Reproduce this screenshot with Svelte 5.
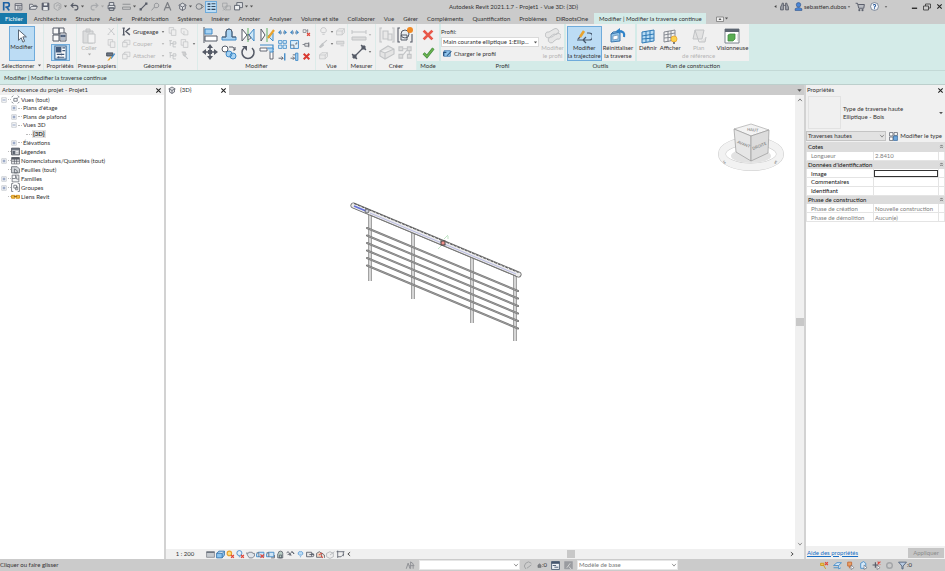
<script>
	const K = '#555a66'
	const G = '#c2c4c6'
	const B = '#3f8ac8'
	const L = '#a9d3f2'
	const R = '#e0483c'
	const N = 'none'
	const O = '#e8a32e'

	// every icon is a list of [path, stroke, fill, stroke width] on a 16x16 grid
	const icons = {
		logo: [['M3 15V1h6a4 4 0 0 1 0 8H6M8 9l5 6', '#1d62a5', N, 3]],
		home: [['M2 3h12v11H2zM2 6h12M7 6v8M9 9h3M9 11h3', K, '#e6e8ea', 1.5]],
		open: [['M1 13V4h5l1 2h6v2M1 13l3-5h11l-3 5z', K, '#e3e5e8', 1.4]],
		save: [['M2 2h12v12H2z', K, '#5a6070', 1.5], ['M5 2h6v4H5zM4 9h8v5H4z', N, '#e8eaec', 0]],
		sync: [['M8 1l6 3v7l-6 4-6-4V4zM6 8a3 3 0 1 1 3 3', '#a0a2a5', N, 1.5]],
		undo: [['M2 6h8a4 4 0 0 1 0 8H8M6 2L2 6l4 4', K, N, 2]],
		redo: [['M14 6H6a4 4 0 0 0 0 8h2M10 2l4 4-4 4', '#a8aaad', N, 2]],
		print: [['M4 6V1h8v5M2 6h12v6H2zM4 10h8v5H4z', K, '#e3e5e8', 1.6]],
		measure: [['M1 4h14M1 9h14v4H1z', '#85888c', N, 1.5]],
		dim: [['M3 13L13 3', K, N, 2], ['M1 11h4v4H1zM11 1h4v4h-4z', N, K, 0]],
		tag: [['M1 15l5-6M6 9V5a4 4 0 1 1 5 5H6', '#8d9094', N, 1.5]],
		text: [['M2 15L8 1l6 14M4 10h8', '#7b7e83', N, 2.2]],
		view3d: [['M1 6l7-4 7 4M3 6v6l5 3 5-3V6M3 6l5 3 5-3M8 9v6', K, '#dfe1e4', 1.5]],
		section: [['M7 3a5 5 0 1 1 0 10a5 5 0 1 1 0-10M11 4l4 4-4 4', '#74787e', N, 1.6]],
		thin: [['M1 2h5v3H1zM1 7h5v2H1zM1 12h5v2H1z', N, '#34495f', 0], ['M8 3h7M8 8h7M8 13h7', '#34495f', N, 2]],
		closewin: [['M1 2h8v7H1zM7 7h8v7H7zM2 11l4 4M6 11l-4 4', '#a0a2a5', N, 1.4]],
		switch: [['M5 1h10v9H5z', K, '#dfe1e4', 1.5], ['M1 6h9v8H1z', K, '#eef0f1', 1.6]],
		caret: [['M3 5h10l-5 6z', N, '#555', 0]],
		caretg: [['M3 5h10l-5 6z', N, '#a8a8a8', 0]],
		left: [['M11 3v10L4 8z', N, '#444', 0]],
		chevd: [['M3 5l5 6 5-6', '#777', N, 2]],
		chevu: [['M3 11l5-6 5 6', '#666', N, 2.2]],
		chevl: [['M11 3L5 8l6 5', '#444', N, 2.4]],
		chevr: [['M5 3l6 5-6 5', '#444', N, 2.4]],
		chev2: [['M4 7l4-4 4 4M4 13l4-4 4 4', '#333', N, 2]],
		binoc: [['M3 5l1-3h2v12H1V9zM13 5l-1-3h-2v12h5V9zM6 6h4', K, '#9da1a9', 1.5]],
		user: [['M8 1a4 4 0 1 1 0 8a4 4 0 1 1 0-8M2 15v-3l4-2h4l4 2v3z', '#294b83', '#4a86d6', 1]],
		cart: [['M1 2h3l2 8h8l1-6H5', K, '#b9bcc2', 1.5], ['M6 12h2v2H6zM11 12h2v2h-2z', K, K, 1]],
		help: [['M8 1a7 7 0 1 1 0 14a7 7 0 1 1 0-14', '#5c6a80', '#f3f5f8', 1.3], ['M6 6a2 2 0 1 1 3 2l-1 1v1M8 11v2', '#2a5b9c', N, 1.8]],
		min: [['M2 12h12', '#222', N, 3]],
		restore: [['M5 6V2h10v8h-4M1 6h10v8H1z', '#333', N, 1.6]],
		close: [['M3 3l10 10M13 3L3 13', '#222', N, 2.4]],
		cursor: [['M4 1v12l3-3 2 5 2-1-2-5h4z', '#53606e', '#fff', 1.1]],
		famtype: [['M1 1h6v6H1zM1 8h6v6H1zM7 1h5v6H7z', K, '#fafafa', 1], ['M8 6h6v8H8z', K, '#fff', 1], ['M9 8h4v2H9zM9 12h4', '#41597a', '#6b7688', 0.8]],
		props: [['M2 1h12v14H2z', '#3d6d9c', '#fdfdfd', 1.2], ['M3 2h6v6H3z', N, '#41597a', 0], ['M10 3h3M10 6h3M4 10h8M4 13h8M9 9v2M6 12v2', '#41597a', N, 1.2]],
		paste: [['M2 3h10v12H2zM5 1h4v3H5z', G, '#dcddde', 1], ['M7 6h7v9H7z', G, '#f3f3f3', 1]],
		cut: [['M3 2l9 10M12 2L3 12M1 13h3M11 13h3', G, N, 1.6]],
		copyg: [['M2 1h8v10H2z', G, '#eee', 1.3], ['M6 5h8v10H6z', G, '#eee', 1.3]],
		brush: [['M1 3h10v5H1z', '#3f4854', '#6d7784', 1.3], ['M14 4L8 12', B, N, 2], ['M9 10l-4 5H2l5-6z', N, O, 0]],
		cope: [['M1 2h4M1 14h4M3 2v12M14 2L7 8l7 6', K, N, 2.4], ['M7 8l4-5', K, N, 1.5]],
		cutgeo: [['M1 6h8v8H1zM5 6V2h9v8H9M1 6l4-4', G, '#eee', 1.3]],
		wallg: [['M2 3h7l5 4v7H7l-5-4zM7 7v7', G, '#eee', 1.3]],
		splitg: [['M2 3h5M4 3v9M4 8h5M9 5h5v4H9zM9 9v5h5', G, N, 1.6]],
		hammerg: [['M3 2h6l2 4-3 3-3-3M8 8l6 6', G, '#cfcfcf', 1.8]],
		align: [['M2 0v16', K, N, 1], ['M3 2h7v5H3z', B, L, 1], ['M3 9h12v5H3z', K, '#fff', 1]],
		offset: [['M1 13h14v-3h-4V5a3 3 0 0 0-6 0v5H1z', B, L, 1], ['M1 10h4V5a3 3 0 0 1 6 0v5h4', K, N, 1]],
		mirror: [['M2 2v12l5-6z', K, '#fff', 1], ['M8 1v14', '#5fae63', N, 1], ['M14 2v12L9 8z', B, '#cfe7f6', 1], ['M8 7v6l3-2z', K, '#eee', 0.8]],
		mirrord: [['M2 2v12l4-6z', K, '#fff', 1], ['M8 1v14', '#5fae63', N, 1], ['M14 6v8L9 9z', B, '#cfe7f6', 1], ['M15 3l-6 8', O, N, 2.2]],
		move: [['M8 3v10M3 8h10', K, N, 1.6], ['M8 0l3 4H5zM8 16l3-4H5zM0 8l4-3v6zM16 8l-4-3v6z', N, K, 0], ['M6 6h4v4H6z', N, K, 0]],
		copy: [['M4 2a3 3 0 1 1 0 6a3 3 0 1 1 0-6', K, '#fff', 1], ['M8 3h4l2 3M12 6h2V3', K, N, 1], ['M8 7a3 3 0 1 1 0 6a3 3 0 1 1 0-6M12 9a3 3 0 1 1 0 6a3 3 0 1 1 0-6', B, L, 1]],
		rotate: [['M4 4a6 6 0 1 0 8 0', K, N, 1.5], ['M2 2h5v5z', N, K, 0]],
		trim: [['M1 4h7v3H1zM11 7h3v8h-3z', K, '#fff', 0.9], ['M1 1h13v5', B, N, 1.2], ['M8 4h6v4h-3', B, L, 1]],
		split: [['M5 3v9L0 8zM11 3v9l5-4z', N, B, 0], ['M4 6h3v4H4zM9 6h3v4H9z', N, '#8ea3b8', 0]],
		array: [['M1 1h6v5H1zM9 1h6v5H9zM1 9h6v6H1zM9 9h6v6H9z', B, '#d6ebf9', 1.4]],
		scale: [['M1 1h14v14H1z', B, '#dff0fb', 1.6], ['M1 9h6v6M9 7h3V4', K, N, 1.4]],
		extend: [['M1 11h8M6 8l3 3-3 3', K, N, 1.6], ['M12 2v13', B, N, 2.4]],
		extend2: [['M1 11h7M5 8l3 3-3 3M5 5h5', K, N, 1.5], ['M10 2h4v13h-4z', B, L, 1.6]],
		unpin: [['M2 3h5v5H2zM7 5h4M10 2v7', '#7c8088', N, 1.3], ['M9 9l5 5M14 9l-5 5', R, N, 2.4]],
		pin: [['M12 4v9M5 6h7v5H5zM1 8h4', '#6a6e76', '#e0e0e0', 1.4]],
		del: [['M3 3l10 10M13 3L3 13', '#d93a32', N, 3.6]],
		bulbg: [['M8 1a5 5 0 0 1 3 9H5a5 5 0 0 1 3-9M6 13h4', G, '#eee', 1.5]],
		boxg: [['M1 7l4-4h10v7l-4 4H1zM1 7h10l4-4M11 7v7', G, '#e9e9e9', 1.3]],
		brushg: [['M14 2L6 9M6 8l2 3-5 4-2-1z', G, G, 1.8]],
		lineg: [['M1 4h13v5H1zM8 12h6', G, '#ddd', 1.5]],
		measureg: [['M1 5h14M1 3v4M15 3v4M1 10h14v3H1z', G, '#ddd', 1]],
		diml: [['M3 13L13 3', K, N, 1.3], ['M1 10l5 5M10 1l5 5', K, N, 1.2], ['M2 11h3v3H2zM11 2h3v3h-3z', K, K, 1]],
		groupg: [['M3 1H1v14h2M13 1h2v14h-2M4 4h5v8H4zM9 7h4v6H9z', G, '#e8e8e8', 1.1]],
		assembly: [['M3 1H1v14h2M15 7v8h-2', K, N, 1.1], ['M8 3a4 4 0 1 1 0 8a4 4 0 1 1 0-8M4 8h6v5H4z', K, '#e8edf2', 1], ['M13 0a3 3 0 1 1 0 6a3 3 0 1 1 0-6', N, '#f08a24', 0]],
		partsg: [['M1 7l8-5 6 3v5l-9 5-5-3zM1 7l5 2 9-4M6 9v6', G, '#e4e4e4', 1.1]],
		nodesg: [['M1 2h4v4H1zM10 2h4v4h-4zM1 10h4v4H1zM10 10h4v4h-4zM5 4h5M5 11l5-6M12 6v4', G, '#ddd', 1.1]],
		check: [['M2 9l4 4 8-10', '#3d8b40', N, 3.6], ['M2 9l4 4 8-10', '#6cb04f', N, 2]],
		cancel: [['M3 3l10 10M13 3L3 13', '#e8584a', N, 3.2]],
		load: [['M2 3h11v10H2z', '#3b76ad', '#8fc3ea', 1.3], ['M1 13V6h5M15 4l-8 8', '#24527f', N, 1.8]],
		profg: [['M9 1a3 3 0 1 1 0 5l-3 2a3 3 0 1 1-2-4zM11 6a3 3 0 1 1 1 5l-3 2a3 3 0 1 1-2-4z', G, '#e6e6e6', 1]],
		path: [['M1 12h12a3 3 0 0 0 0-7h-2M10 9l-3 3 3 3', '#45566b', N, 1.2], ['M8 3L4 9', O, N, 2.6], ['M4 9l-2 2', K, N, 1.2]],
		reset: [['M1 6l9-2v9l-9 1zM1 6l2-2 9-1v2', '#3b76ad', '#8fc3ea', 1], ['M3 8l5-1v4l-5 1z', '#6f93b5', '#fff', 0.8], ['M14 9c1-4-1-6-5-6', '#2e83c9', N, 2.2], ['M10 0v6L6 3z', N, '#2e83c9', 0]],
		plane: [['M2 4l12-2v11l-12 2zM6 3v11M10 3v10M2 8l12-2M2 11l12-1', '#2e79b5', '#b7dcf4', 1]],
		show: [['M2 4l11-2v10l-11 2zM6 3v11M9 3v10M2 7l11-2M2 10l11-1', '#7b8088', '#f2f2f2', 0.9], ['M12 8a3 3 0 1 1 0 6a3 3 0 1 1 0-6', O, '#fbd24e', 0.8], ['M11 15h2', K, N, 1.3]],
		planeg: [['M4 2h9l-2 9H2zM8 14h6l1-5M4 2l4 12', G, '#e2e2e2', 1]],
		viewer: [['M1 1h14v14H1z', '#7b828c', '#fff', 1], ['M1 1h14v3H1z', N, '#5d6672', 0], ['M4 7l2-1h5v5l-2 2H4z', '#3f8a3f', '#59ad52', 0.8], ['M14 6v7', G, N, 1]],
		ribbonmenu: [['M1 4h14v9H1z', '#666', '#eee', 1.3], ['M8 6l3 4H5z', N, '#555', 0]],
		edittype: [['M1 1h6v6H1zM9 1h6v5H9zM1 9h6v6H1z', K, '#fff', 1.3], ['M8 7h7v8H8z', '#2d5f96', '#6ea7dc', 1.2]],
		views: [['M1 4l3-3M12 1l3 3M15 12l-3 3M4 15l-3-3M5 6h6v5H5zM11 6l2-2', K, N, 1.3]],
		legend: [['M1 2h14v12H1z', '#4d525a', '#b7bac0', 1.5], ['M1 2h14v3H1zM3 7h4v6H3z', N, '#5c6470', 0], ['M9 8h4M9 11h4', '#fff', N, 1.3]],
		sched: [['M1 3h14v11H1zM1 7h14M6 3v11M10 3v11M1 10h14', '#555a63', '#fff', 1.2], ['M1 2h14v4H1z', N, '#555a63', 0]],
		sheet: [['M1 3h10l4 4v7H1zM6 7l5 3v4H6z', '#555a63', '#d6d9dd', 1.3]],
		family: [['M2 2h12v12H2zM2 8h6V2M10 4v5h4', '#6a6f78', '#f2f3f4', 1.4]],
		group: [['M4 1H1v14h3M12 1h3v14h-3M5 4h5v5H5zM9 7h3v5H8z', '#5c616a', N, 1.3]],
		link: [['M1 6h6v5H1zM9 6h6v5H9z', '#d18b12', '#f2c14a', 1.6], ['M5 8h6', '#9a6a16', N, 1.8]],
		plus: [['M2 2h12v12H2z', '#9aa0a8', '#fff', 1.3], ['M4 8h8M8 4v8', '#3e5c94', N, 1.6]],
		minus: [['M2 2h12v12H2z', '#9aa0a8', '#fff', 1.3], ['M4 8h8', '#3e5c94', N, 1.6]],
		detail: [['M1 3h14v10H1z', '#7b8088', '#c6cacf', 1.3], ['M1 4h14', '#5c6470', N, 2]],
		style: [['M1 6l4-4h10v7l-4 5H1zM1 6h10l4-4M11 6v8', '#2c6ea8', '#8cc4ee', 1.4]],
		sun: [['M6 2a4 4 0 1 1 0 8a4 4 0 1 1 0-8', O, '#fbe08a', 2], ['M9 9l5 5M14 9l-5 5', R, N, 2.2]],
		shadow: [['M6 1a4 4 0 1 1 0 9a4 4 0 1 1 0-9M5 12h3', B, '#e1effa', 1.5], ['M9 9l5 5M14 9l-5 5', R, N, 2.2]],
		teapot: [['M1 5l3 1 1-2h6l1 2h3v5l-4 3H6L3 10z', '#6c7480', '#dfe4ea', 1.4]],
		crop: [['M4 4h10v8H1V7z', B, '#cfe4f5', 1.6], ['M1 5h4v7', K, N, 1.2], ['M8 8l6 6M14 8l-6 6', R, N, 2]],
		cropshow: [['M4 4h10v8H1V7z', B, '#cfe4f5', 1.6], ['M1 5h4v7M9 14h6V9', K, N, 1.4]],
		lock: [['M4 6a4 4 0 0 1 8 0v8H3V7zM6 9h4v5H6z', K, '#b9cdc4', 1.4]],
		glasses: [['M1 5l3-2 5 7M3 9a2 2 0 1 1 4 1M9 9a3 3 0 1 1 5-2L10 2', K, N, 1.5]],
		bulb: [['M8 3a3 3 0 0 1 2 6H6a3 3 0 0 1 2-6M7 12h2', '#5c9bd5', '#bfe0f8', 1.5]],
		constraint: [['M1 4h9v8H1zM6 8h8M11 6a3 3 0 1 1 0 6', K, '#e6e6e6', 1.5]],
		displace: [['M1 13V6l5-3 4 3v7zM10 5l5 4v5', K, '#f2d6c2', 1.4], ['M5 9l6-4M9 10l3 4', R, N, 1.8]],
		ghost: [['M1 6l6-3 6 3v6l-6 3-6-3zM7 9l8-6', '#a9acb0', '#eee', 1.3]],
		scope: [['M1 3h14M3 1v13M13 3v8M3 12h6l5-5', K, N, 1.4]],
		wsets: [['M2 14l3-9 3 9M9 14V3l4 3v8M7 9h8', '#909296', N, 1.6]],
		pencilg: [['M3 14a7 7 0 0 1 10-10M5 13l8-6', '#999b9e', '#ccc', 1.5]],
		house: [['M3 14V7l5-5 5 5v7z', '#5d6065', '#808388', 1.5]],
		options: [['M1 1h14v14H1z', '#44566e', '#eef2f7', 1.5], ['M1 1h14v4H1z', N, '#44566e', 0], ['M3 8h6M6 11h7', '#44566e', N, 1.6]],
		excl: [['M1 1h14v13H1z', '#9a9ca0', '#9a9ca0', 1], ['M5 12l6-8M9 10l4 5', '#ddd', N, 1.5]],
		sellink: [['M1 4h6v4H1zM6 7l4 7', '#cf9a1d', '#f0c456', 1.6], ['M9 2l5 5M14 2L9 7', R, N, 2.2]],
		selund: [['M1 8l6-5h8l-5 5zM1 12h8M10 8v6l4-2', B, '#d5e8f8', 1.5]],
		selpin: [['M3 2h7v7H3zM6 9v4', '#c66a34', '#e9a067', 1.6], ['M9 7v8l5-3z', K, '#fff', 1]],
		selface: [['M3 4l5-3 4 3v9H3z', B, '#d5e8f8', 1.5], ['M9 7v8l5-3z', K, '#fff', 1]],
		seldrag: [['M6 2v10M1 7h10', K, N, 2], ['M10 1l5 5M15 1l-5 5', R, N, 2], ['M9 7v8l5-3z', K, '#fff', 1]],
		gear: [['M8 3a5 5 0 1 1 0 10a5 5 0 1 1 0-10', '#a3a5a8', N, 2.5]],
		filter: [['M1 2h14L9 9v5H7V9z', '#4e5f78', '#b9cbe2', 1.5]]
	}

	const quick = [
		['logo', 'Revit'], ['home', 'Accueil'], [''], ['open', 'Ouvrir'], ['save', 'Enregistrer'],
		['sync', 'Synchroniser'], ['caret'], ['undo', 'Annuler'], ['caret'], [''], ['redo', 'Rétablir'],
		['caretg'], ['print', 'Imprimer'], [''], ['measure', 'Mesurer'], ['caret'], ['dim', 'Cote alignée'],
		['tag', 'Étiquette'], ['text', 'Texte'], [''], ['view3d', 'Vue 3D par défaut'], ['caret'],
		['section', 'Coupe'], ['thin', 'Lignes fines'], [''], ['closewin', 'Fermer les vues'],
		['switch', 'Changer de fenêtre'], ['caret'], ['caret']
	]

	const tabs = [
		'Fichier', 'Architecture', 'Structure', 'Acier', 'Préfabrication', 'Systèmes', 'Insérer',
		'Annoter', 'Analyser', 'Volume et site', 'Collaborer', 'Vue', 'Gérer', 'Compléments',
		'Quantification', 'Problèmes', 'DiRootsOne', 'Modifier | Modifier la traverse continue'
	]

	const geometry = [
		['cope', 'Grugeage', 'copyg', 'wallg', false],
		['cutgeo', 'Couper', 'splitg', 'copyg', true],
		['cutgeo', 'Attacher', 'splitg', 'hammerg', false]
	]

	const modifyLarge = ['align', 'offset', 'mirror', 'mirrord', 'move', 'copy', 'rotate', 'trim']
	const modifySmall = ['split', 'split', 'unpin', 'array', 'scale', 'pin', 'extend', 'extend2', 'del']

	// level, expander, icon, label
	const tree = [
		[0, 'minus', 'views', 'Vues (tout)'],
		[1, 'plus', '', "Plans d'étage"],
		[1, 'plus', '', 'Plans de plafond'],
		[1, 'minus', '', 'Vues 3D'],
		[2, '', '', '{3D}'],
		[1, 'plus', '', 'Élévations'],
		[0, '', 'legend', 'Légendes'],
		[0, 'plus', 'sched', 'Nomenclatures/Quantités (tout)'],
		[0, '', 'sheet', 'Feuilles (tout)'],
		[0, 'plus', 'family', 'Familles'],
		[0, 'plus', 'group', 'Groupes'],
		[0, '', 'link', 'Liens Revit']
	]

	const properties = [
		{ head: 'Cotes' },
		{ name: 'Longueur', value: '2.8410', off: true },
		{ head: "Données d'identification" },
		{ name: 'Image', value: '', focus: true },
		{ name: 'Commentaires', value: '' },
		{ name: 'Identifiant', value: '' },
		{ head: 'Phase de construction' },
		{ name: 'Phase de création', value: 'Nouvelle construction', off: true },
		{ name: 'Phase de démolition', value: 'Aucun(e)', off: true }
	]

	const viewTools = ['detail', 'style', 'sun', 'shadow', 'teapot', 'crop', 'cropshow', 'lock', 'glasses', 'bulb', 'constraint', 'displace', 'ghost', 'scope']
	const selectTools = ['sellink', 'selund', 'selpin', 'selface', 'seldrag', 'gear', 'filter']

	const rods = [0, 1, 2, 3, 4, 5]
	const posts = [
		[20, 14, 81],
		[63, 32, 99],
		[122, 56, 123],
		[165, 75, 141]
	]

	let activeTab = $state(tabs.length - 1)
	let selected = $state(4)
</script>

{#snippet icon(name, size)}
	<svg class="icon" width={size} height={size} viewBox="0 0 16 16" aria-hidden="true">
		{#each icons[name] as [d, stroke, fill, sw]}
			<path {d} {stroke} {fill} stroke-width={sw} />
		{/each}
	</svg>
{/snippet}

{#snippet tool(name, size, label)}
	<button class="tool" aria-label={label ?? name}>{@render icon(name, size)}</button>
{/snippet}

<div class="app">
	<header class="titlebar">
		<div class="quick">
			{#each quick as [name, label]}
				{#if !name}
					<span class="gap"></span>
				{:else if name.startsWith('caret')}
					<button class="drop" aria-label="Menu">{@render icon(name, 5)}</button>
				{:else}
					<button class="qbtn" class:on={name === 'thin'} aria-label={label}>{@render icon(name, 9)}</button>
				{/if}
			{/each}
		</div>
		<h1>Autodesk Revit 2021.1.7 - Projet1 - Vue 3D: {'{3D}'}</h1>
		<div class="account">
			{@render icon('left', 5)}
			{@render tool('binoc', 9, 'Rechercher')}
			<button class="user">{@render icon('user', 9)}<span>sebastien.dubos</span>{@render icon('caret', 4)}</button>
			{@render tool('cart', 10, 'Boutique')}
			{@render tool('help', 9, 'Aide')}
			{@render icon('caret', 4)}
		</div>
		<div class="window">
			{@render tool('min', 7, 'Réduire')}
			{@render tool('restore', 8, 'Restaurer')}
			{@render tool('close', 7, 'Fermer')}
		</div>
	</header>

	<nav class="tabs">
		{#each tabs as tab, i}
			<button class:file={i === 0} class:active={i === activeTab} onclick={() => (activeTab = i)}>{tab}</button>
		{/each}
		<button class="more" aria-label="Affichage du ruban">{@render icon('ribbonmenu', 8)}{@render icon('caret', 5)}</button>
	</nav>

	<div class="ribbon">
		<section class="panel select">
			<div class="body">
				<button class="big on">{@render icon('cursor', 14)}<span>Modifier</span></button>
			</div>
			<h2>Sélectionner {@render icon('caret', 5)}</h2>
		</section>
		<section class="panel props">
			<div class="body stack">
				{@render tool('famtype', 16, 'Propriétés du type')}
				<button class="tool on" aria-label="Propriétés">{@render icon('props', 15)}</button>
			</div>
			<h2>Propriétés</h2>
		</section>
		<section class="panel clip">
			<div class="body">
				<button class="big" disabled>{@render icon('paste', 16)}<span>Coller</span>{@render icon('caretg', 5)}</button>
				<div class="rows">
					{@render tool('cut', 9, 'Couper')}
					{@render tool('copyg', 9, 'Copier')}
					{@render tool('brush', 10, 'Copier le type')}
				</div>
			</div>
			<h2>Presse-papiers</h2>
		</section>
		<section class="panel geometry">
			<div class="body rows">
				{#each geometry as [name, label, a, b, more], i}
					<div class="line">
						<button class="wide" disabled={i > 0}>{@render icon(name, 9)}<span>{label}</span>{@render icon(i ? 'caretg' : 'caret', 4)}</button>
						{@render tool(a, 9)}
						{@render tool(b, 9)}
						{#if more}{@render icon('caret', 4)}{/if}
					</div>
				{/each}
			</div>
			<h2>Géométrie</h2>
		</section>
		<section class="panel modify">
			<div class="body">
				<div class="large">
					{#each modifyLarge as name}{@render tool(name, 16)}{/each}
				</div>
				<div class="small">
					{#each modifySmall as name}{@render tool(name, 9)}{/each}
				</div>
			</div>
			<h2>Modifier</h2>
		</section>
		<section class="panel view">
			<div class="body rows">
				<div class="line">{@render tool('bulbg', 9)}{@render icon('caret', 4)}{@render tool('boxg', 9)}</div>
				<div class="line">{@render tool('brushg', 9)}{@render icon('caret', 4)}{@render tool('lineg', 9)}</div>
				<div class="line">{@render tool('boxg', 9)}</div>
			</div>
			<h2>Vue</h2>
		</section>
		<section class="panel measure">
			<div class="body stack">
				<div class="line">{@render tool('measureg', 16)}{@render icon('caretg', 4)}</div>
				<div class="line">{@render tool('diml', 16)}{@render icon('caret', 4)}</div>
			</div>
			<h2>Mesurer</h2>
		</section>
		<section class="panel create">
			<div class="body large">
				{@render tool('groupg', 16)}
				{@render tool('assembly', 16)}
				{@render tool('partsg', 16)}
				{@render tool('nodesg', 15)}
			</div>
			<h2>Créer</h2>
		</section>
		<section class="panel context mode">
			<div class="body stack">
				{@render tool('cancel', 14, 'Annuler')}
				{@render tool('check', 13, 'Terminer')}
			</div>
			<h2>Mode</h2>
		</section>
		<section class="panel context profile">
			<div class="body">
				<div class="field">
					<label for="profile">Profil:</label>
					<span class="combo">
						<select id="profile"><option>Main courante elliptique 1:Ellip...</option></select>
						{@render icon('caret', 5)}
					</span>
					<button class="wide">{@render icon('load', 9)}<span>Charger le profil</span></button>
				</div>
				<button class="big" disabled>{@render icon('profg', 16)}<span>Modifier<br />le profil</span></button>
			</div>
			<h2>Profil</h2>
		</section>
		<section class="panel context tools">
			<div class="body">
				<button class="big on">{@render icon('path', 16)}<span>Modifier<br />la trajectoire</span></button>
				<button class="big">{@render icon('reset', 16)}<span>Réinitialiser<br />la traverse</span></button>
			</div>
			<h2>Outils</h2>
		</section>
		<section class="panel context plan">
			<div class="body">
				<button class="big">{@render icon('plane', 16)}<span>Définir</span></button>
				<button class="big">{@render icon('show', 16)}<span>Afficher</span></button>
				<button class="big" disabled>{@render icon('planeg', 16)}<span>Plan<br />de référence</span></button>
				<button class="big">{@render icon('viewer', 16)}<span>Visionneuse</span></button>
			</div>
			<h2>Plan de construction</h2>
		</section>
	</div>

	<div class="optionbar">Modifier | Modifier la traverse continue</div>

	<main>
		<aside class="browser">
			<div class="head"><h2>Arborescence du projet - Projet1</h2>{@render tool('close', 7, 'Fermer')}</div>
			<ul>
				{#each tree as [level, exp, name, label], i}
					<li class="level{level}">
						<span class="exp">{#if exp}{@render icon(exp, 6)}{/if}</span>
						<span class="branch"></span>
						{#if name}{@render icon(name, 9)}{/if}
						<button class:current={i === selected} onclick={() => (selected = i)}>{label}</button>
					</li>
				{/each}
			</ul>
		</aside>

		<div class="center">
			<div class="viewtabs">
				<div class="viewtab">{@render icon('view3d', 8)}<span>{'{3D}'}</span>{@render tool('close', 7, 'Fermer la vue')}</div>
				{@render icon('caret', 7)}
			</div>
			<div class="viewrow">
				<div class="canvas">
					<svg class="railing" width="176" height="144" viewBox="0 0 176 144" role="img" aria-label="Garde-corps">
						{#each posts as [x, top, bottom]}
							<path d="M{x} {top}V{bottom}" stroke="#a2a2a2" stroke-width="4" />
							<path d="M{x} {top}V{bottom}" stroke="#d6d6d6" stroke-width="2" />
						{/each}
						{#each rods as n}
							<path d="M17 {28 + n * 7.5}L168 {91 + n * 7.5}" stroke="#777" stroke-width="2" stroke-linecap="round" />
							<path d="M17 {28 + n * 7.5}L168 {91 + n * 7.5}" stroke="#b4b4b4" stroke-width="0.6" />
						{/each}
						<path d="M3.5 5.5L168.5 74.5" stroke="#666" stroke-width="6" stroke-linecap="round" />
						<path d="M3.5 5.5L168.5 74.5" stroke="#ececec" stroke-width="4.4" stroke-linecap="round" />
						<path d="M4 3.5L168.5 72.5" stroke="#555" stroke-width="1" stroke-dasharray="3 1" />
						<path d="M20 13L166 74" stroke="#b9bbe4" stroke-width="1" />
						<path d="M20 15L166 76" stroke="#777" stroke-width="0.8" />
						<path d="M4 6L16 11" stroke="#6470d8" stroke-width="1.6" />
						<circle cx="17" cy="11" r="2" fill="#c7cad8" stroke="#555" stroke-width="0.8" />
						<path d="M88 49l3-3M94 39l4-4M98 39v-3" stroke="#a6d8ae" stroke-width="0.7" />
						<rect x="91" y="41" width="4" height="4" fill="#f2908b" stroke="#444" stroke-width="1" />
					</svg>
					<svg class="cube" width="68" height="52" viewBox="0 0 68 52" role="img" aria-label="ViewCube">
						<ellipse cx="34" cy="34" rx="29" ry="13" fill="none" stroke="#c9c9c9" stroke-width="8" />
						<ellipse cx="34" cy="34" rx="29" ry="13" fill="none" stroke="#f2f2f2" stroke-width="7" />
						<ellipse cx="34" cy="36" rx="20" ry="7" fill="#e2e2e2" />
						<path d="M17 9L34 4L52 10L34 16Z" fill="#f3f3f3" stroke="#aaa" stroke-width="0.7" />
						<path d="M17 9L34 16V41L19 32Z" fill="#e6e6e6" stroke="#999" stroke-width="0.7" />
						<path d="M52 10L34 16V41L51 33Z" fill="#dcdcdc" stroke="#999" stroke-width="0.7" />
						<text x="30" y="11" transform="rotate(5 34 10)">HAUT</text>
						<text x="20" y="23" transform="rotate(22 20 23)">AVANT</text>
						<text x="36" y="30" transform="rotate(-22 36 30)">DROITE</text>
						<text x="7" y="44" transform="rotate(-25 7 44)">S</text>
						<text x="57" y="43" transform="rotate(25 57 43)">E</text>
					</svg>
				</div>
				<div class="vscroll">
					{@render icon('chevu', 6)}
					<span class="thumb"></span>
					{@render icon('chevd', 6)}
				</div>
			</div>
			<div class="viewbar">
				<button class="scale">1 : 200</button>
				{#each viewTools as name}{@render tool(name, 9)}{/each}
				{@render icon('chevl', 6)}
				<div class="hscroll"><span class="thumb"></span></div>
				{@render icon('chevr', 6)}
				<span class="corner"></span>
			</div>
		</div>

		<aside class="palette">
			<div class="head"><h2>Propriétés</h2>{@render tool('close', 7, 'Fermer')}</div>
			<button class="type">
				<span class="preview"></span>
				<span class="typename">Type de traverse haute<br />Elliptique - Bois</span>
				{@render icon('caret', 6)}
			</button>
			<div class="filter">
				<span class="combo">
					<select aria-label="Catégorie"><option>Traverses hautes</option></select>
					{@render icon('chevd', 6)}
				</span>
				<button class="wide">{@render icon('edittype', 9)}<span>Modifier le type</span></button>
			</div>
			<table>
				<colgroup><col class="names" /><col /><col class="marks" /></colgroup>
				<tbody>
					{#each properties as row}
						{#if row.head}
							<tr class="group"><th colspan="2">{row.head}</th><td>{@render icon('chev2', 5)}</td></tr>
						{:else}
							<tr class:off={row.off}>
								<th scope="row">{row.name}</th>
								<td><input class:focus={row.focus} value={row.value} aria-label={row.name} disabled={row.off} /></td>
								<td></td>
							</tr>
						{/if}
					{/each}
				</tbody>
			</table>
			<div class="foot">
				<a href="#aide">Aide des propriétés</a>
				<button disabled>Appliquer</button>
			</div>
		</aside>
	</main>

	<footer>
		<span class="status">Cliquer ou faire glisser</span>
		<div class="sets">
			{@render tool('wsets', 10, 'Sous-projets')}
			<span class="combo"><select aria-label="Sous-projet actif"><option></option></select>{@render icon('chevd', 6)}</span>
			{@render tool('pencilg', 9)}
			<button class="tool" aria-label="Demandes">{@render icon('house', 5)}<span>:0</span></button>
			{@render tool('options', 9, 'Variantes')}
			{@render tool('excl', 9, 'Exclure')}
			<span class="combo"><select aria-label="Variante"><option>Modèle de base</option></select>{@render icon('chevd', 6)}</span>
		</div>
		<div class="picks">
			{#each selectTools as name}{@render tool(name, 9)}{/each}
			<span>:0</span>
		</div>
	</footer>
</div>

<style>
	:global(body) {
		margin: 0;
	}
	.app {
		display: flex;
		flex-direction: column;
		min-height: 100vh;
		background: #cbcbcb;
		color: #333;
		font: 6px/8px Lato, "Open Sans", sans-serif;
		overflow: hidden;
	}
	button, select, input {
		margin: 0;
		padding: 0;
		border: 0;
		background: none;
		color: inherit;
		font: inherit;
		border-radius: 0;
	}
	button {
		display: flex;
		align-items: center;
		justify-content: center;
		white-space: nowrap;
	}
	h1, h2 {
		margin: 0;
		font: inherit;
		white-space: nowrap;
	}
	.icon {
		display: block;
		flex: none;
	}

	.titlebar {
		display: flex;
		align-items: center;
		height: 13px;
	}
	.titlebar h1 {
		flex: 1;
		text-align: center;
	}
	.quick, .account, .window {
		display: flex;
		align-items: center;
	}
	.qbtn {
		width: 12px;
		height: 12px;
	}
	.on {
		background: #bcdcf4;
		box-shadow: inset 0 0 0 1px #6fabdb;
	}
	.drop {
		width: 5px;
	}
	.quick .gap {
		width: 3px;
	}
	.account {
		gap: 2px;
		width: 110px;
	}
	.user {
		gap: 1px;
		margin-right: 2px;
	}
	.account .tool {
		margin-right: 3px;
	}
	.window {
		justify-content: flex-end;
		gap: 5px;
		width: 60px;
		padding-right: 2px;
	}

	.tabs {
		display: flex;
		height: 11px;
	}
	.tabs button {
		padding: 0 4px 0 5px;
	}
	.tabs .file {
		margin-right: 2px;
		background: #1979aa;
		color: #fff;
	}
	.tabs .active {
		margin-left: 2px;
		background: #d4ebe8;
	}
	.tabs .more {
		margin-left: 5px;
	}

	.ribbon {
		display: flex;
		height: 47px;
		background: #d4ebe8;
		border-bottom: 1px solid #c3d9d6;
		box-sizing: border-box;
	}
	.panel {
		display: flex;
		flex-direction: column;
		flex: none;
		background: #f0f0f0;
		border-right: 1px solid #dcebe9;
		box-sizing: border-box;
		height: 46px;
	}
	.panel h2 {
		display: flex;
		align-items: center;
		justify-content: center;
		gap: 2px;
		height: 9px;
	}
	.context h2 {
		background: #d4ebe8;
	}
	.context {
		border-right: 2px solid #d4ebe8;
	}
	.body {
		display: flex;
		justify-content: center;
		height: 35px;
		padding-top: 2px;
	}
	.select { width: 44px; }
	.props { width: 33px; }
	.clip { width: 41px; }
	.geometry { width: 80px; }
	.modify { width: 118px; }
	.view { width: 32px; }
	.measure { width: 28px; }
	.create { width: 41px; }
	.mode { width: 24px; }
	.profile { width: 125px; }
	.tools { width: 71px; }
	.plan { width: 114px; }
	.big {
		flex-direction: column;
		justify-content: flex-start;
		min-width: 22px;
		padding: 2px 1px 0;
		line-height: 8px;
	}
	.select .big {
		width: 26px;
		padding-top: 3px;
	}
	.big:disabled, .wide:disabled {
		color: #b5b5b5;
	}
	.stack {
		flex-direction: column;
		align-items: center;
	}
	.stack > :global(*) {
		flex: 1;
	}
	.stack .on {
		width: 19px;
	}
	.body.rows, .rows {
		display: grid;
		grid-template-rows: repeat(3, 11px);
		align-content: start;
		justify-content: start;
		gap: 1px;
	}
	.clip .rows {
		margin-left: 6px;
	}
	.line {
		display: flex;
		align-items: center;
		gap: 1px;
	}
	.geometry .body {
		padding-left: 4px;
	}
	.geometry .line {
		gap: 3px;
	}
	.wide {
		gap: 2px;
	}
	.geometry .wide {
		justify-content: flex-start;
		width: 43px;
	}
	.geometry .wide span {
		flex: 1;
		text-align: left;
	}
	.large {
		display: grid;
		grid-template-columns: repeat(4, 19px);
		grid-template-rows: 17px 18px;
	}
	.create .large {
		grid-template-columns: 18px 18px;
	}
	.small {
		display: grid;
		grid-template-columns: repeat(3, 12px);
		grid-template-rows: repeat(3, 12px);
		align-content: start;
	}
	.view .body {
		padding-left: 3px;
	}
	.view .line {
		gap: 2px;
	}
	.profile .body {
		gap: 2px;
	}
	.field {
		display: flex;
		flex-direction: column;
		align-items: flex-start;
		gap: 1px;
		padding-top: 2px;
		width: 98px;
	}
	.combo {
		display: flex;
		align-items: center;
		box-sizing: border-box;
		width: 98px;
		height: 10px;
		background: #fff;
		border: 1px solid #dadada;
	}
	.combo select {
		flex: 1;
		min-width: 0;
		padding-left: 1px;
		appearance: none;
		line-height: 8px;
	}
	.field .wide {
		padding: 1px 2px;
	}
	.plan .body {
		justify-content: space-around;
	}

	.optionbar {
		box-sizing: border-box;
		height: 14px;
		padding: 3px 4px;
		background: #d4ebe8;
		border-bottom: 1px solid #bccfcc;
	}

	main {
		display: flex;
		flex: 1;
	}
	.head {
		display: flex;
		align-items: center;
		justify-content: space-between;
		height: 10px;
		padding: 0 2px;
		background: #f0f0f0;
	}
	.browser {
		width: 164px;
		background: #fff;
		border-right: 2px solid #d2d2d2;
	}
	.browser ul {
		display: grid;
		grid-auto-rows: 1fr;
		height: 106px;
		margin: 0;
		padding: 0 0 0 1px;
		list-style: none;
	}
	.browser li {
		display: flex;
		align-items: center;
	}
	.level1 {
		padding-left: 10px;
	}
	.level2 {
		padding-left: 18px;
	}
	.exp {
		width: 7px;
	}
	.branch {
		width: 3px;
		border-top: 1px dotted #bbb;
	}
	.level1 .branch {
		width: 4px;
	}
	.level2 .branch {
		width: 6px;
	}
	.browser li button {
		padding: 0 1px;
	}
	.browser .current {
		background: #e2e2e2;
		font-weight: bold;
	}

	.center {
		display: flex;
		flex-direction: column;
		flex: 1;
		min-width: 0;
		background: #fff;
	}
	.viewtabs {
		display: flex;
		align-items: center;
		justify-content: space-between;
		height: 10px;
		padding-right: 1px;
		background: #cbcbcb;
	}
	.viewtab {
		display: flex;
		align-items: center;
		gap: 4px;
		box-sizing: border-box;
		width: 63px;
		height: 10px;
		padding: 0 2px;
		background: #fff;
	}
	.viewtab span {
		flex: 1;
	}
	.viewrow {
		display: flex;
		flex: 1;
	}
	.canvas {
		position: relative;
		flex: 1;
	}
	.railing {
		position: absolute;
		top: 105px;
		left: 184px;
	}
	.cube {
		position: absolute;
		top: 25px;
		right: 10px;
	}
	.cube text {
		font-size: 4px;
		font-weight: bold;
		fill: #8d8d8d;
	}
	.vscroll {
		display: flex;
		flex-direction: column;
		align-items: center;
		justify-content: space-between;
		width: 9px;
		padding: 2px 0;
		background: #f0f0f0;
	}
	.thumb {
		width: 8px;
		height: 8px;
		background: #c8c8c8;
	}
	.viewbar {
		display: flex;
		align-items: center;
		height: 10px;
		gap: 1px;
		background: #f0f0f0;
	}
	.viewbar .tool {
		width: 9px;
	}
	.viewbar .scale {
		width: 38px;
	}
	.viewbar .scale + :global(.tool) {
		margin-left: 1px;
	}
	.hscroll {
		display: flex;
		justify-content: center;
		flex: 1;
	}
	.corner {
		width: 8px;
	}

	.palette {
		display: flex;
		flex-direction: column;
		width: 139px;
		background: #fff;
		border-left: 2px solid #d2d2d2;
	}
	.palette .head {
		padding: 0 1px;
	}
	.type {
		gap: 2px;
		height: 35px;
		padding: 0 1px 0 2px;
		background: #f0f0f0;
	}
	.preview {
		width: 31px;
		height: 31px;
		border: 1px solid #e2e2e2;
	}
	.typename {
		flex: 1;
		text-align: left;
	}
	.filter {
		display: flex;
		align-items: center;
		justify-content: space-between;
		height: 12px;
		padding-right: 3px;
		background: #f0f0f0;
	}
	.filter .combo {
		width: 80px;
		background: #e2e2e2;
		border-color: #c4c4c4;
	}
	table {
		width: 100%;
		height: 80px;
		border-collapse: collapse;
		table-layout: fixed;
	}
	.names {
		width: 67px;
	}
	.marks {
		width: 6px;
	}
	tr {
		height: 8px;
	}
	th, td {
		padding: 0;
		border: 1px solid #e4e4e4;
		font-weight: normal;
		text-align: left;
		line-height: 7px;
		overflow: hidden;
	}
	th {
		padding-left: 4px;
		color: #111;
	}
	td input {
		display: block;
		box-sizing: border-box;
		width: 100%;
		height: 7px;
		padding-left: 1px;
	}
	td .focus {
		outline: 1px solid #333;
		outline-offset: -1px;
	}
	.group th, .group td {
		padding-left: 1px;
		background: #dcdcdc;
		border-color: #dcdcdc;
	}
	.group td {
		padding: 0;
	}
	.off th, .off input {
		color: #808080;
	}
	.foot {
		display: flex;
		align-items: center;
		justify-content: space-between;
		height: 13px;
		margin-top: auto;
		padding: 0 1px;
		background: #f0f0f0;
	}
	.foot a {
		color: #1a6fc4;
	}
	.foot button {
		width: 36px;
		height: 10px;
		background: #c6c6c6;
		color: #8b8b8b;
	}

	footer {
		display: flex;
		align-items: center;
		height: 12px;
	}
	.status {
		width: 405px;
	}
	.sets {
		display: flex;
		align-items: center;
		flex: 1;
		gap: 4px;
	}
	.sets .combo {
		border-color: #e6e6e6;
		color: #777;
		width: 101px;
	}
	.picks {
		display: flex;
		align-items: center;
		gap: 4px;
		padding-right: 33px;
	}
	.picks span {
		margin-left: -4px;
	}
</style>
